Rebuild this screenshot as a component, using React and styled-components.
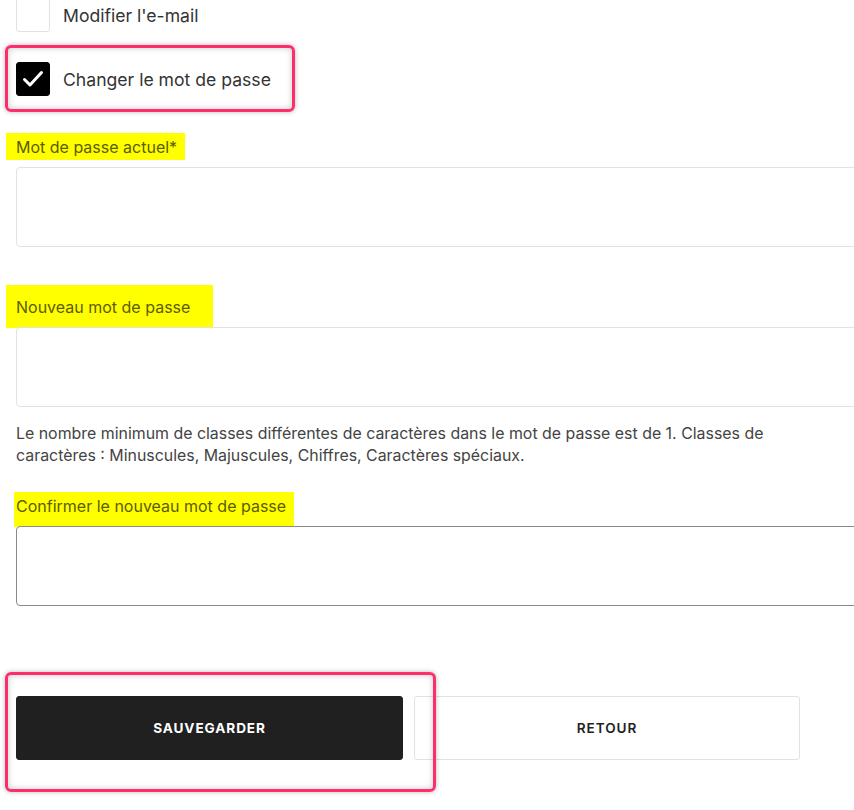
import React from "react";
import styled, { createGlobalStyle } from "styled-components";

const Global = createGlobalStyle`
  html, body { margin: 0; padding: 0; background: #fff; overflow: hidden; }
  body { font-family: Inter, "Noto Sans", sans-serif; color: #333; }
`;

const Form = styled.div`
  display: flex;
  flex-direction: column;
  padding: 0 0 60px 16px;
  width: 900px;
`;

const CheckRow = styled.label`
  position: relative;
  display: flex;
  align-items: center;
  gap: 13px;
  height: 34px;
  margin-top: ${(p) => p.$mt}px;
  font-size: 17.6px;
  color: #333;
`;

const Box = styled.span`
  width: 34px;
  height: 34px;
  box-sizing: border-box;
  border-radius: 3px;
  border: 1px solid ${(p) => (p.$checked ? "#000" : "#e2e2e2")};
  background: ${(p) => (p.$checked ? "#000" : "#fff")};
  display: flex;
  align-items: center;
  justify-content: center;
`;

const Frame = styled.div`
  position: absolute;
  top: ${(p) => p.$top}px;
  left: ${(p) => p.$left}px;
  width: ${(p) => p.$w}px;
  height: ${(p) => p.$h}px;
  box-sizing: border-box;
  border: 3px solid #fe2d6c;
  border-radius: 6px;
  box-shadow: 0 0 5px rgba(0, 0, 0, 0.28), inset 0 0 6px rgba(0, 0, 0, 0.22);
  pointer-events: none;
`;

const Field = styled.div`
  display: flex;
  flex-direction: column;
  align-items: flex-start;
  margin-top: ${(p) => p.$mt}px;
`;

const Label = styled.span`
  display: inline-block;
  font-size: 16px;
  line-height: 20px;
  color: rgb(92, 92, 0);
  background: #ffff00;
  padding: ${(p) => p.$pad};
  margin: ${(p) => p.$m};
`;

const Input = styled.div`
  margin-top: 10px;
  width: 860px;
  height: 80px;
  box-sizing: border-box;
  border: 1px solid ${(p) => (p.$focus ? "#8a8a8a" : "#e2e2e2")};
  border-radius: 4px;
  background: #fff;
`;

const Help = styled.p`
  margin: 16px 0 0;
  width: 790px;
  font-size: 15.9px;
  line-height: 22px;
  color: #444;
`;

const Buttons = styled.div`
  position: relative;
  display: flex;
  gap: 11px;
  margin-top: 90px;
`;

const Button = styled.button`
  width: ${(p) => p.$w}px;
  height: 64px;
  box-sizing: border-box;
  border-radius: 3px;
  border: 1px solid ${(p) => (p.$primary ? "#202020" : "#e2e2e2")};
  background: ${(p) => (p.$primary ? "#202020" : "#fff")};
  color: ${(p) => (p.$primary ? "#fff" : "#222")};
  font-family: Inter, "Noto Sans", sans-serif;
  font-size: 13.6px;
  font-weight: ${(p) => (p.$primary ? 700 : 600)};
  letter-spacing: 0.9px;
  text-transform: uppercase;
`;

export default function App() {
  return (
    <>
      <Global />
      <Form>
        <CheckRow $mt={-2}>
          <Box />
          Modifier l'e-mail
        </CheckRow>
        <CheckRow $mt={30}>
          <Box $checked>
            <svg width="24" height="24" viewBox="0 0 24 24" fill="none" stroke="#fff" strokeWidth="3" strokeLinecap="round" strokeLinejoin="round">
              <path d="M3.5 12.5l5.5 5.5L20.5 5.5" />
            </svg>
          </Box>
          Changer le mot de passe
          <Frame $top={-17} $left={-11} $w={290} $h={67} />
        </CheckRow>

        <Field $mt={41}>
          <Label $pad="4px 8px 3px 10px" $m="-4px -8px -3px -10px">Mot de passe actuel*</Label>
          <Input />
        </Field>

        <Field $mt={50}>
          <Label $pad="12px 23px 11px 10px" $m="-12px -23px -11px -10px">Nouveau mot de passe</Label>
          <Input />
        </Field>

        <Help>
          Le nombre minimum de classes différentes de caractères dans le mot de passe est de 1. Classes de caractères : Minuscules, Majuscules, Chiffres, Caractères spéciaux.
        </Help>

        <Field $mt={29}>
          <Label $pad="4px 8px 11px 2px" $m="-4px -8px -11px -2px">Confirmer le nouveau mot de passe</Label>
          <Input $focus />
        </Field>

        <Buttons>
          <Button $primary $w={387}>Sauvegarder</Button>
          <Button $w={386}>Retour</Button>
          <Frame $top={-24} $left={-11} $w={431} $h={120} />
        </Buttons>
      </Form>
    </>
  );
}
